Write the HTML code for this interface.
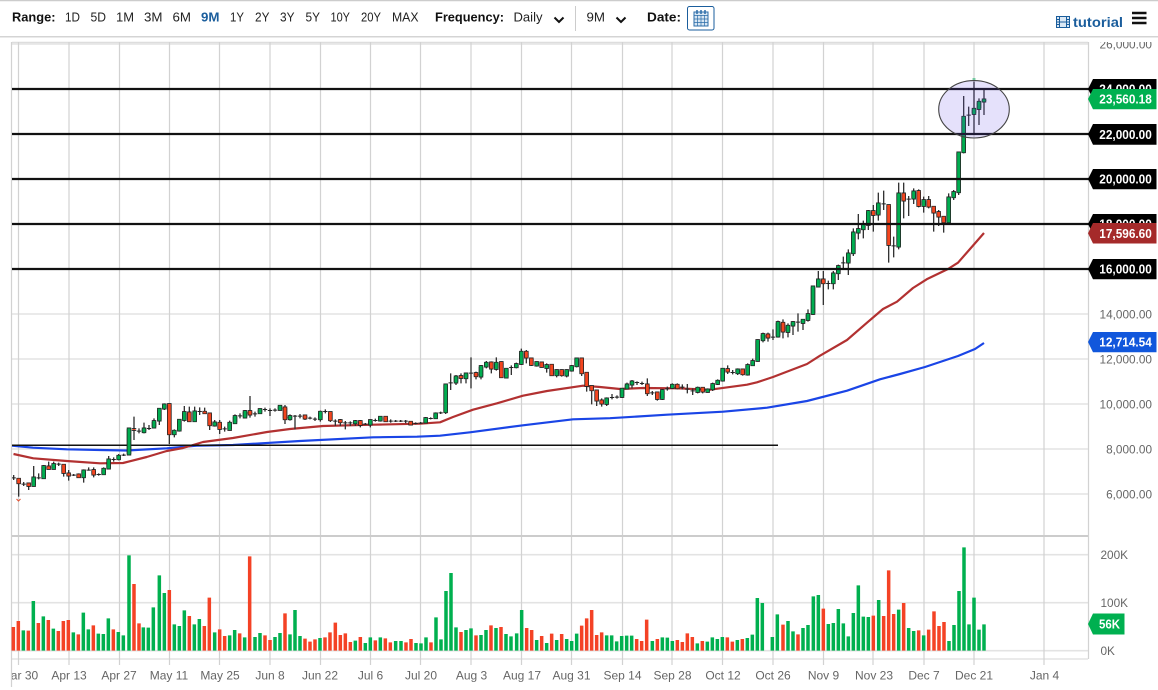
<!DOCTYPE html>
<html><head><meta charset="utf-8"><title>Chart</title>
<style>
html,body{margin:0;padding:0;background:#fff;overflow:hidden}
svg{display:block;font-family:"Liberation Sans",sans-serif;filter:blur(.3px)}
.t{font-size:12.5px;fill:#222}
.b{font-size:12.5px;font-weight:bold;fill:#111}
.ax{font-size:11.8px;fill:#666}
.xl{font-size:12px;fill:#666;text-anchor:middle}
.lb{font-size:12.5px;font-weight:bold;fill:#fff}
</style></head><body>
<svg width="1158" height="690" viewBox="0 0 1158 690" xmlns="http://www.w3.org/2000/svg">
<defs>
<clipPath id="cl"><rect x="12" y="42" width="1076" height="648"/></clipPath>
<clipPath id="ct"><rect x="1090" y="42" width="68" height="30"/></clipPath>
<path id="a1" d="M101 292V318M131 258V295M161 252V267M251 271V292M311 266V283M326 238V266M356 227V238M387 145V224M432 145V157M462 123V143M478 86V122M493 73V86M523 152V163M538 119V152M553 96V120M584 94V124M644 127V137M689 128V150M705 108V130M735 93V113M780 87V100M840 77V90M870 108V118"/>
<path id="a2" d="M56 296V310M86 310V318M146 259V267M191 254V279M206 280V287M236 283V292M281 270V284M508 72V163M568 97V124M629 100V136M659 128V147M750 93V104M855 82V118M614 95V100M402 147V150"/>
<path id="b1" d="M91 215V238M196 243V250M241 240V254M271 230V242M407 234V248M437 220V235M467 133V217M498 109V128M528 100V115M573 78V110M589 68V80M619 68V87M649 86V113M679 72V82M694 35V72M740 66V77M770 75V84M800 90V106M830 90V107M845 78V92M860 55V79M950 175V192"/>
<path id="b2" d="M45 226V236M121 216V241M151 240V247M211 243V255M287 230V244M362 245V254M513 108V114M558 99V109M604 67V86M634 66V112M709 35V53M724 55V75M755 67V81M785 74V106M815 90V106M875 55V100M890 98V138M905 138V151M920 151V182M935 181V191"/>
<path id="c1" d="M66 386V411M81 373V386M96 364V374M187 390V417M217 374V384M293 383V396M323 388V396M338 372V388M353 362V372M368 326V362M413 328V340M443 315V344M458 303V316M473 240V303M489 222V241M534 186V230M564 197V216M579 186V197M609 179V189M624 162V180M639 79V162"/>
<path id="c2" d="M142 373V400M172 397V417M232 374V385M308 383V395M383 327V335M428 328V343M504 223V233M549 188V215"/>
<path id="d1" d="M85 268V290M130 250V280M145 228V250M175 190V218M190 127V190M205 117V128M220 105V118M235 63V105M265 40V74"/>
<path id="d2" d="M100 268V280M250 63V75"/>
<path id="e1" d="M116 400V560M161 394V416M191 420V438M266 412V487M281 396V412M296 277V397M311 170V277M342 146V162M357 125V147M372 118V125"/>
<path id="e2" d="M86 435V555M131 400V422M176 393V438M206 420V440M221 440V458M236 456V470M251 470V487"/>
</defs>

<rect width="1158" height="690" fill="#fff"/>
<!-- top rules -->
<path d="M0 .5H1158" stroke="#ccc" stroke-width="1.5"/>
<path d="M0 36.7H1158" stroke="#d4d4d4" stroke-width="1.5"/>
<path d="M12 42.5H1088" stroke="#ddd" stroke-width="1.5"/>

<!-- toolbar -->
<text x="12" y="21.500" class="b" textLength="43.5" lengthAdjust="spacingAndGlyphs">Range:</text>
<g class="t">
<text x="65" y="21.500" class="t" textLength="15" lengthAdjust="spacingAndGlyphs">1D</text>
<text x="90.5" y="21.500" class="t" textLength="15.5" lengthAdjust="spacingAndGlyphs">5D</text>
<text x="116" y="21.500" class="t" textLength="18" lengthAdjust="spacingAndGlyphs">1M</text>
<text x="144" y="21.500" class="t" textLength="18.5" lengthAdjust="spacingAndGlyphs">3M</text>
<text x="172.5" y="21.500" class="t" textLength="18.5" lengthAdjust="spacingAndGlyphs">6M</text>
<text x="201" y="21.500" font-size="12.5" font-weight="bold" fill="#1a5d9c" textLength="18.5" lengthAdjust="spacingAndGlyphs">9M</text>
<text x="230" y="21.500" class="t" textLength="14" lengthAdjust="spacingAndGlyphs">1Y</text>
<text x="255" y="21.500" class="t" textLength="14.5" lengthAdjust="spacingAndGlyphs">2Y</text>
<text x="280" y="21.500" class="t" textLength="14.5" lengthAdjust="spacingAndGlyphs">3Y</text>
<text x="305.5" y="21.500" class="t" textLength="14.5" lengthAdjust="spacingAndGlyphs">5Y</text>
<text x="330.5" y="21.500" class="t" textLength="19.5" lengthAdjust="spacingAndGlyphs">10Y</text>
<text x="361" y="21.500" class="t" textLength="20" lengthAdjust="spacingAndGlyphs">20Y</text>
<text x="392" y="21.500" class="t" textLength="26.5" lengthAdjust="spacingAndGlyphs">MAX</text>
<text x="513.5" y="21.500" class="t" textLength="29" lengthAdjust="spacingAndGlyphs">Daily</text>
<text x="586.5" y="21.500" class="t" textLength="18.5" lengthAdjust="spacingAndGlyphs">9M</text>
</g>
<text x="435" y="21.500" class="b" textLength="69" lengthAdjust="spacingAndGlyphs">Frequency:</text>
<text x="647" y="21.500" class="b" textLength="34" lengthAdjust="spacingAndGlyphs">Date:</text>
<path d="M554.500 17.500l4.500 4.500 4.500-4.500M616.500 17.500l4.500 4.500 4.500-4.500" fill="none" stroke="#111" stroke-width="2"/>
<path d="M575.5 6V31" stroke="#ccc"/>
<rect x="687.5" y="6.5" width="26.5" height="23.5" rx="2" fill="#fff" stroke="#1a5d9c"/>
<rect x="694" y="12" width="14" height="14" fill="#d7e6f3" stroke="#2b6ca8"/>
<path d="M694 15.5H708M694 19H708M694 22.5H708M697.5 15V26M701 15V26M704.5 15V26" stroke="#2b6ca8" stroke-width=".7"/>
<path d="M697 10V14M705 10V14M701 10V14" stroke="#2b6ca8" stroke-width="1.5"/>
<rect x="1056.5" y="16.5" width="13" height="11" fill="#dbe8f4" stroke="#1a5d9c"/>
<path d="M1059.5 16.5V27.5M1066.5 16.5V27.5M1056.5 22H1069.5M1056.5 19.5H1059.5M1056.5 24.5H1059.5M1066.5 19.5H1069.5M1066.5 24.5H1069.5" stroke="#1a5d9c" stroke-width="1"/>
<text x="1073" y="27" font-size="13.5" font-weight="bold" fill="#1a5d9c" textLength="50" lengthAdjust="spacingAndGlyphs">tutorial</text>
<path d="M1132 13H1146.500M1132 18H1146.500M1132 23H1146.500" stroke="#111" stroke-width="2.6"/>

<!-- grid -->
<g stroke="#e3e3e3" stroke-width="1.6">
<path d="M12 44H1088M12 89H1088M12 134H1088M12 179H1088M12 224H1088M12 269H1088M12 314H1088M12 359H1088M12 404H1088M12 449H1088M12 494H1088"/>
<path d="M12 554.700H1088M12 602.700H1088M12 650.700H1088M12 659H1088"/>
</g>
<g stroke="#d2d2d2" stroke-width="1.2">
<path d="M18.500 42V665M69 42V665M119.500 42V665M169.500 42V665M219.500 42V665M270 42V665M320.500 42V665M370.500 42V665M420.500 42V665M471 42V665M521.500 42V665M571.500 42V665M622.500 42V665M672 42V665M722.500 42V665M773 42V665M823.500 42V665M873 42V665M924 42V665M974 42V665M1044 42V665"/>
<path d="M11.500 42V687M1088.500 42V659"/>
</g>
<path d="M12 536H1088" stroke="#ccc" stroke-width="2"/>

<!-- axis text -->
<g clip-path="url(#ct)"><text x="1152" y="48.500" class="ax" text-anchor="end">26,000.00</text></g>
<g class="ax" text-anchor="end">
<text x="1152" y="318.500" class="ax">14,000.00</text>
<text x="1152" y="363.500" class="ax">12,000.00</text>
<text x="1152" y="408.500" class="ax">10,000.00</text>
<text x="1152" y="453.500" class="ax">8,000.00</text>
<text x="1152" y="498.500" class="ax">6,000.00</text>
</g>
<text x="1100.500" y="559" class="ax" font-size="12">200K</text>
<text x="1100.500" y="607" class="ax" font-size="12">100K</text>
<text x="1100.500" y="655" class="ax" font-size="12">0K</text>

<g clip-path="url(#cl)"><text x="19.500" y="679.500" class="xl">Mar 30</text></g>
<text x="69" y="679.500" class="xl">Apr 13</text>
<text x="119" y="679.500" class="xl">Apr 27</text>
<text x="169" y="679.500" class="xl">May 11</text>
<text x="220" y="679.500" class="xl">May 25</text>
<text x="270" y="679.500" class="xl">Jun 8</text>
<text x="320" y="679.500" class="xl">Jun 22</text>
<text x="370.500" y="679.500" class="xl">Jul 6</text>
<text x="421" y="679.500" class="xl">Jul 20</text>
<text x="471.500" y="679.500" class="xl">Aug 3</text>
<text x="522" y="679.500" class="xl">Aug 17</text>
<text x="571.500" y="679.500" class="xl">Aug 31</text>
<text x="622.500" y="679.500" class="xl">Sep 14</text>
<text x="672.500" y="679.500" class="xl">Sep 28</text>
<text x="723" y="679.500" class="xl">Oct 12</text>
<text x="773" y="679.500" class="xl">Oct 26</text>
<text x="823.500" y="679.500" class="xl">Nov 9</text>
<text x="874" y="679.500" class="xl">Nov 23</text>
<text x="924" y="679.500" class="xl">Dec 7</text>
<text x="974" y="679.500" class="xl">Dec 21</text>
<text x="1044.500" y="679.500" class="xl">Jan 4</text>

<!-- volume -->
<g fill="none" stroke-width="10.500">
<g transform="translate(0,530) scale(.33333)">
<path stroke="#00b04f" d="M70 301V362M100 213V362M130 259V362M160 296V362M220 307V362M250 248V362M265 298V362M295 311V362M310 312V362M325 265V362M355 306V362M370 316V362M387 76V362M430 292V362M445 293V362M460 232V362M478 136V362M493 189V362M523 283V362M538 288V362M553 241V362M583 283V362M598 267V362M644 307V362M689 316V362M704 300V362M734 322V362M765 321V362M780 309V362M825 321V362M840 309V362M870 313V362M885 240V362M900 318V362M960 324V362M1066 332V362M1096 339V362M1111 322V362M1141 322V362M1187 333V362"/>
<path stroke="#f44225" d="M40 291V362M55 273V362M85 302V362M115 279V362M145 270V362M175 303V362M190 273V362M205 270V362M235 313V362M280 286V362M340 298V362M402 162V362M417 280V362M508 180V362M568 258V362M613 288V362M628 203V362M659 298V362M674 318V362M719 310V362M749 79V362M795 316V362M810 330V362M855 250V362M915 326V362M930 335V362M945 328V362M975 322V362M990 307V362M1006 278V362M1021 315V362M1036 310V362M1051 336V362M1081 321V362M1126 331V362M1156 325V362M1171 337V362"/>
</g>
<g transform="translate(400,530) scale(.33333)">
<path stroke="#00b04f" d="M3 333V362M48 339V362M63 340V362M78 322V362M108 262V362M123 328V362M138 183V362M153 129V362M168 292V362M198 300V362M213 295V362M243 315V362M258 300V362M288 294V362M318 312V362M333 319V362M350 310V362M365 240V362M410 330V362M440 339V362M470 330V362M500 327V362M515 333V362M530 311V362M620 316V362M635 316V362M650 334V362M665 318V362M680 317V362M695 317V362M757 333V362M787 322V362M802 323V362M817 333V362M892 340V362M922 335V362M937 322V362M952 327V362M967 321V362M1012 330V362M1042 324V362M1057 314V362M1072 204V362M1087 219V362M1117 321V362M1132 253V362"/>
<path stroke="#f44225" d="M18 337V362M33 327V362M93 337V362M183 306V362M228 316V362M273 286V362M303 291V362M380 294V362M395 300V362M425 318V362M455 311V362M485 312V362M545 287V362M560 265V362M575 240V362M590 315V362M605 307V362M710 327V362M725 333V362M740 269V362M772 327V362M832 330V362M847 336V362M862 310V362M877 321V362M907 333V362M982 322V362M997 335V362M1027 327V362"/>
</g>
<g transform="translate(780,530) scale(.33333)">
<path stroke="#00b04f" d="M24 273V362M39 304V362M69 294V362M84 285V362M100 199V362M115 195V362M145 282V362M160 279V362M175 237V362M190 280V362M205 319V362M220 249V362M235 166V362M250 260V362M265 261V362M296 210V362M356 239V362M386 294V362M401 303V362M431 316V362M507 333V362M522 285V362M537 183V362M552 52V362M567 283V362M582 203V362M597 299V362M612 283V362"/>
<path stroke="#f44225" d="M9 284V362M54 313V362M130 236V362M280 257V362M311 258V362M326 121V362M341 252V362M371 219V362M416 301V362M446 299V362M462 244V362M477 288V362M492 276V362"/>
</g>
</g>

<!-- moving averages -->
<g clip-path="url(#cl)" fill="none" stroke-linejoin="round">
<path stroke="#1a45e6" stroke-width="2.200" d="M12 445.600L33 447.700L66.700 449.300L100 450L127 450.500L166.700 448.300L196.700 445.700L233 445L300 441L373 437.300L417 436.700L440 435.700L470 432.300L523 425.300L573 419.300L610 418.200L667 414.700L723 411.700L767 407.700L807 401L847 390.700L880 379.300L900 374L925 367L958 356L975 349L984 343"/>
<path stroke="#b23131" stroke-width="2.200" d="M13.500 454L33.300 458.300L66.700 461L100 463.300L123 463L146.700 457L166.700 451L183 448L203 442L233 438L267 432L290 429L323 426L373 424.700L420 423.700L440 422.300L453 417L473 409.700L497 403.300L523 395.700L547 391L583 385.700L600 387L620 389L643 388L677 388.300L710 389.700L747 384.700L757 382.300L773 377L807 364L820 355.700L847 340L867 322.700L883 309L897 301.700L913 288L926.700 279.300L948 269L958 262.700L984 233"/>
<path stroke="#111" stroke-width="1.500" d="M12 445.300H778"/>
</g>

<!-- candles -->
<g clip-path="url(#cl)" fill="none">
<g transform="translate(0,380) scale(.33333)">
<path stroke="#333" stroke-width="4" d="M41 285V300M56 296V350M71 306V318M86 310V330M101 258V320M116 280V298M131 255V297M146 245V268M161 245V268M176 248V258M191 254V290M206 270V302M221 282V288M236 280V293M251 268V308M266 262V272M281 262V292M296 280V287M311 262V284M326 228V268M341 232V245M356 222V241M371 221V228M387 145V226M402 110V180M417 145V160M432 128V160M447 135V150M462 115V145M478 84V135M493 70V90M508 72V192M523 148V172M538 117V155M553 78V125M568 80V126M584 80V125M599 82V105M614 83V102M629 100V150M644 120V140M659 120V162M674 140V155M689 122V152M705 103V132M720 100V115M735 90V115M750 48V113M765 95V110M780 85V102M795 83V95M810 85V108M825 85V95M840 75V92M855 75V132M870 103V122"/>
<use href="#a1" stroke="#222" stroke-width="13.500" y="-2.500"/><use href="#a1" stroke="#222" stroke-width="13.500" y="2.500"/><use href="#a1" stroke="#00ad50" stroke-width="9"/>
<use href="#a2" stroke="#222" stroke-width="13.500" y="-2.500"/><use href="#a2" stroke="#222" stroke-width="13.500" y="2.500"/><use href="#a2" stroke="#f4451f" stroke-width="9"/>
<path stroke="#222" stroke-width="13" d="M41 292v3M71 311v3M116 292v3M176 251v3M221 284v3M266 269v3M296 282v3M341 237v3M371 224v3M417 152v3M447 144v3M599 93v3M674 145v3M720 106v3M765 100v3M795 87v3M810 90v3M825 89v3"/>
</g>
<g transform="translate(290,340) scale(.33333)">
<path stroke="#333" stroke-width="4" d="M15 225V268M30 222V235M45 225V240M60 230V238M75 232V243M91 212V245M106 208V220M121 216V246M136 238V258M151 237V258M166 243V268M181 244V258M196 240V258M211 240V262M226 249V255M241 238V262M256 236V245M271 228V245M287 228V246M302 238V248M317 240V246M332 240V246M347 240V250M362 243V256M377 247V253M392 246V252M407 231V250M422 232V238M437 217V237M452 215V222M467 132V222M482 100V150M498 105V135M513 100V130M528 98V130M543 52V145M558 95V118M573 75V118M589 63V85M604 64V100M619 52V92M634 64V114M649 84V115M664 76V105M679 68V85M694 26V75M709 30V70M724 55V78M740 64V80M755 65V83M770 70V98M785 72V108M800 88V112M815 88V110M830 88V112M845 75V95M860 53V82M875 55V108M890 98V155M905 138V193M920 150V198M935 175V200M950 172V198"/>
<use href="#b1" stroke="#222" stroke-width="13.500" y="-2.500"/><use href="#b1" stroke="#222" stroke-width="13.500" y="2.500"/><use href="#b1" stroke="#00ad50" stroke-width="9"/>
<use href="#b2" stroke="#222" stroke-width="13.500" y="-2.500"/><use href="#b2" stroke="#222" stroke-width="13.500" y="2.500"/><use href="#b2" stroke="#f4451f" stroke-width="9"/>
<path stroke="#222" stroke-width="13" d="M15 227v3M30 227v3M60 233v3M75 236v3M106 213v3M136 242v3M166 247v3M181 247v3M226 251v3M256 240v3M302 242v3M317 242v3M332 242v3M347 242v3M377 249v3M392 248v3M422 234v3M452 217v3M482 127v3M543 98v3M664 81v3"/>
</g>
<g transform="translate(600,260) scale(.33333)">
<path stroke="#333" stroke-width="4" d="M36 402V418M51 406V416M66 384V414M81 368V388M96 360V385M111 364V375M126 365V375M142 355V408M157 393V405M172 395V422M187 387V420M202 380V392M217 370V387M232 370V388M247 373V388M262 372V400M278 385V405M293 380V400M308 381V400M323 385V398M338 368V393M353 358V375M368 325V365M383 316V342M398 330V343M413 325V345M428 326V347M443 310V347M458 296V318M473 238V305M489 218V247M504 218V245M519 208V240M534 182V233M549 178V235M564 190V232M579 183V225M594 160V215M609 178V210M624 148V185M639 77V165"/>
<use href="#c1" stroke="#222" stroke-width="13.500" y="-2.500"/><use href="#c1" stroke="#222" stroke-width="13.500" y="2.500"/><use href="#c1" stroke="#00ad50" stroke-width="9"/>
<use href="#c2" stroke="#222" stroke-width="13.500" y="-2.500"/><use href="#c2" stroke="#222" stroke-width="13.500" y="2.500"/><use href="#c2" stroke="#f4451f" stroke-width="9"/>
<path stroke="#222" stroke-width="13" d="M36 411v3M51 410v3M111 366v3M126 369v3M157 397v3M202 385v3M247 380v3M262 386v3M278 391v3M398 336v3M519 230v3M594 185v3"/>
</g>
<g transform="translate(790,190) scale(.33333)">
<path stroke="#333" stroke-width="4" d="M85 243V292M100 243V345M115 272V298M130 243V298M145 224V270M160 200V235M175 178V255M190 115V198M205 72V148M220 92V145M235 60V120M250 45V125M265 8V92M281 2V60"/>
<use href="#d1" stroke="#222" stroke-width="13.500" y="-2.500"/><use href="#d1" stroke="#222" stroke-width="13.500" y="2.500"/><use href="#d1" stroke="#00ad50" stroke-width="9"/>
<use href="#d2" stroke="#222" stroke-width="13.500" y="-2.500"/><use href="#d2" stroke="#222" stroke-width="13.500" y="2.500"/><use href="#d2" stroke="#f4451f" stroke-width="9"/>
<path stroke="#222" stroke-width="13" d="M115 279v3M160 217v3M281 40v3"/>
</g>
<g transform="translate(860,60) scale(.33333)">
<path stroke="#333" stroke-width="4" d="M86 435V608M101 530V592M116 368V568M131 368V475M146 408V468M161 385V432M176 388V442M191 410V458M206 408V445M221 440V515M236 450V498M251 468V518M266 400V490M281 390V420M296 275V405M311 108V280M326 140V198M342 65V222M357 115V195M372 88V165"/>
<use href="#e1" stroke="#222" stroke-width="13.500" y="-2.500"/><use href="#e1" stroke="#222" stroke-width="13.500" y="2.500"/><use href="#e1" stroke="#00ad50" stroke-width="9"/>
<use href="#e2" stroke="#222" stroke-width="13.500" y="-2.500"/><use href="#e2" stroke="#222" stroke-width="13.500" y="2.500"/><use href="#e2" stroke="#f4451f" stroke-width="9"/>
<path stroke="#222" stroke-width="13" d="M101 556v3M146 416v3M326 164v3"/>
</g>
</g>
<path d="M16.500 499l2 2 2-2" fill="none" stroke="#e05030" stroke-width="1"/>
<path d="M972.500 79h3" stroke="#2bb673" stroke-width="1.200"/>

<!-- horizontal levels -->
<path d="M12 89H1090M12 134H1090M12 179H1090M12 224H1090M12 269H1090" stroke="#111" stroke-width="2.200"/>

<!-- ellipse -->
<ellipse cx="974" cy="109.300" rx="35.300" ry="28.700" fill="rgba(100,80,230,.17)" stroke="#444" stroke-width="1.100"/>

<!-- price labels -->
<g>
<path d="M1093 79H1156.500V99H1093L1088 89Z" fill="#000"/><text x="1099.300" y="93.500" class="lb" textLength="52.500" lengthAdjust="spacingAndGlyphs">24,000.00</text>
<path d="M1093 89H1156.500V109.300H1093L1088 99Z" fill="#00b050"/><text x="1099.300" y="103.500" class="lb" textLength="52.500" lengthAdjust="spacingAndGlyphs">23,560.18</text>
<path d="M1093 124H1156.500V144.700H1093L1088 134.300Z" fill="#000"/><text x="1099.300" y="138.800" class="lb" textLength="52.500" lengthAdjust="spacingAndGlyphs">22,000.00</text>
<path d="M1093 169H1156.500V189.300H1093L1088 179Z" fill="#000"/><text x="1099.300" y="183.500" class="lb" textLength="52.500" lengthAdjust="spacingAndGlyphs">20,000.00</text>
<path d="M1093 214H1156.500V234H1093L1088 224Z" fill="#000"/><text x="1099.300" y="228.500" class="lb" textLength="52.500" lengthAdjust="spacingAndGlyphs">18,000.00</text>
<path d="M1093 223H1156.500V243.500H1093L1088 233.300Z" fill="#a52a2a"/><text x="1099.300" y="237.800" class="lb" textLength="52.500" lengthAdjust="spacingAndGlyphs">17,596.60</text>
<path d="M1093 259H1156.500V279.300H1093L1088 269Z" fill="#000"/><text x="1099.300" y="273.500" class="lb" textLength="52.500" lengthAdjust="spacingAndGlyphs">16,000.00</text>
<path d="M1093 332H1156.500V352.300H1093L1088 342Z" fill="#1157dc"/><text x="1099.300" y="346.500" class="lb" textLength="52.500" lengthAdjust="spacingAndGlyphs">12,714.54</text>
<path d="M1093 613.500H1124.500V634.500H1093L1088 624Z" fill="#00b050"/><text x="1099" y="628.500" class="lb" textLength="21" lengthAdjust="spacingAndGlyphs">56K</text>
</g>
</svg>
</body></html>
